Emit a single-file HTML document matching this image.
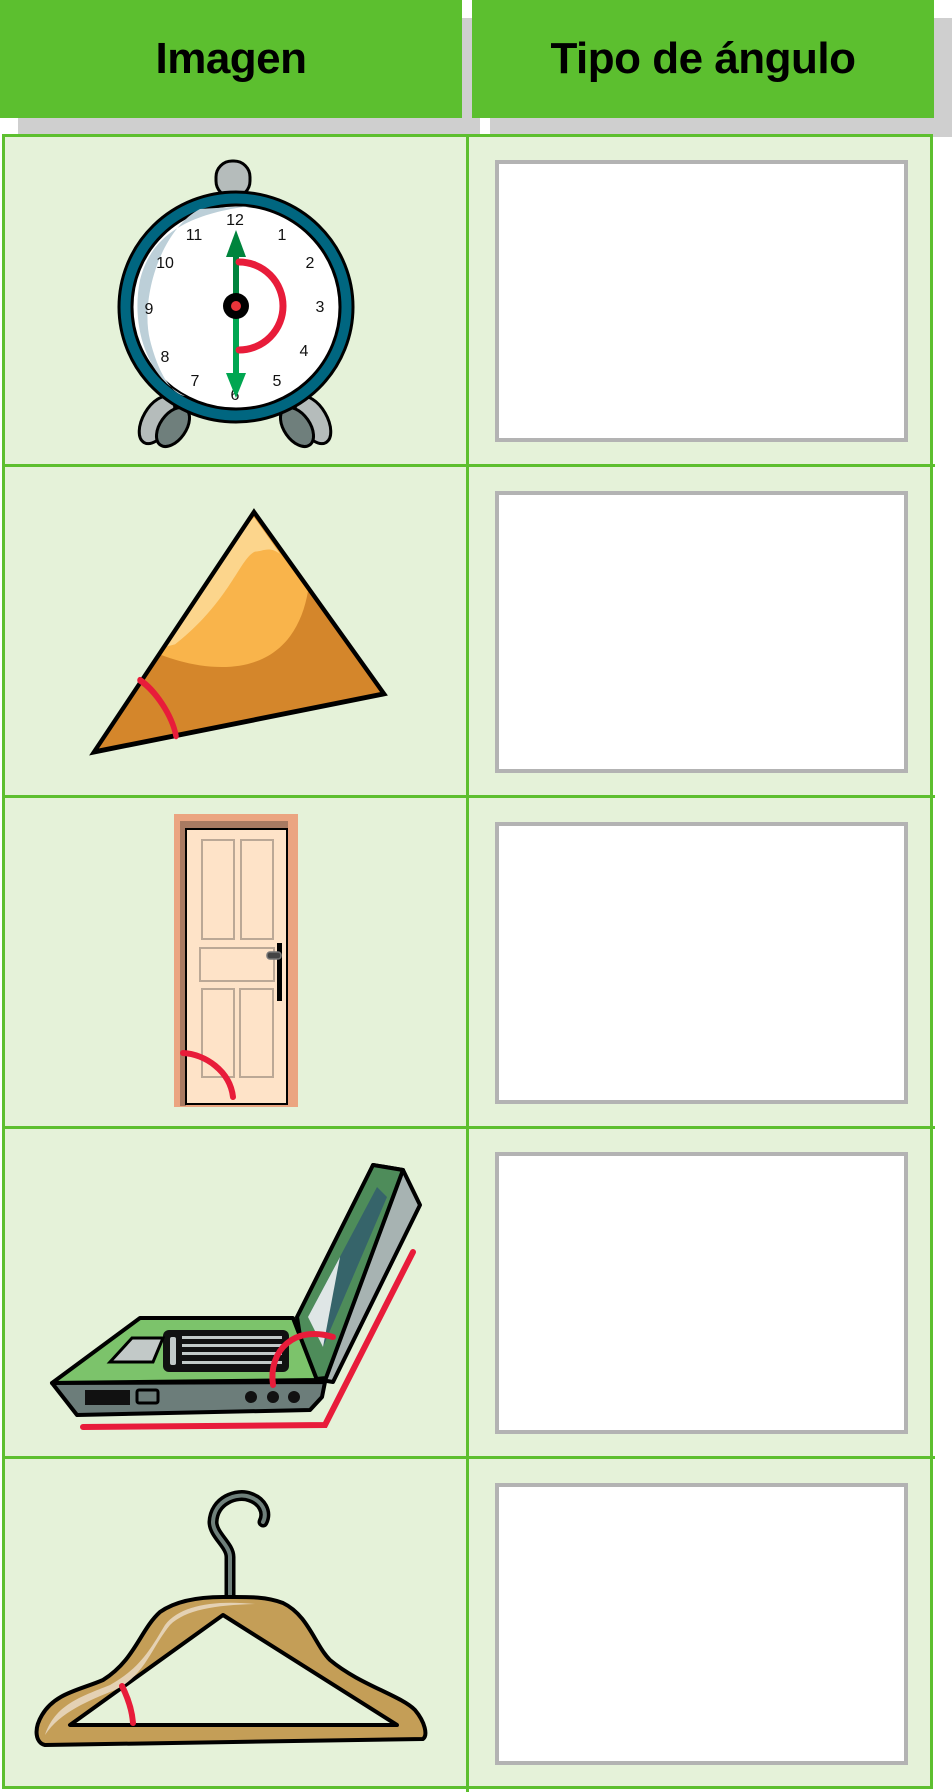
<!DOCTYPE html>
<html><head><meta charset="utf-8"><style>
html,body{margin:0;padding:0;background:#fff;}
body{width:952px;height:1792px;position:relative;overflow:hidden;font-family:"Liberation Sans",sans-serif;}
.sh{position:absolute;background:#cfcfcf;}
.hd{position:absolute;background:#5cbf2f;top:0;height:118px;display:flex;align-items:center;justify-content:center;font-weight:bold;font-size:44px;color:#000;letter-spacing:-0.5px;}
.tbl{position:absolute;left:2px;top:134px;width:931px;height:1655px;background:#e5f2d9;border:3px solid #5dbf2f;box-sizing:border-box;}
.hl{position:absolute;left:2px;width:933px;height:3px;background:#5dbf2f;}
.vl{position:absolute;left:466px;top:134px;width:3px;height:1658px;background:#5dbf2f;}
.box{position:absolute;left:495px;width:413px;height:282px;background:#fff;border:4px solid #b3b3b3;box-sizing:border-box;}
svg{position:absolute;left:0;top:0;}
</style></head><body>
<div class="sh" style="left:18px;top:18px;width:462px;height:119px"></div>
<div class="sh" style="left:490px;top:18px;width:462px;height:119px"></div>
<div class="hd" style="left:0;width:462px">Imagen</div>
<div class="hd" style="left:472px;width:462px">Tipo de ángulo</div>
<div class="tbl"></div>
<div class="hl" style="top:464px"></div>
<div class="hl" style="top:795px"></div>
<div class="hl" style="top:1126px"></div>
<div class="hl" style="top:1456px"></div>
<div class="vl"></div>
<div class="box" style="top:160px"></div>
<div class="box" style="top:491px"></div>
<div class="box" style="top:822px"></div>
<div class="box" style="top:1152px"></div>
<div class="box" style="top:1483px"></div>
<svg width="952" height="1792" viewBox="0 0 952 1792">
<defs><clipPath id="tri"><path d="M254 508 L384 655 L94 702 Z"/></clipPath></defs>
<!-- clock -->
<g stroke="#000" stroke-width="3">
<ellipse cx="157" cy="420" rx="14" ry="26" transform="rotate(30 157 420)" fill="#b5bcbb"/>
<ellipse cx="173" cy="427" rx="13" ry="22" transform="rotate(35 173 427)" fill="#6f7f7c"/>
<ellipse cx="313" cy="420" rx="14" ry="26" transform="rotate(-30 313 420)" fill="#b5bcbb"/>
<ellipse cx="297" cy="427" rx="13" ry="22" transform="rotate(-35 297 427)" fill="#6f7f7c"/>
<rect x="216" y="161" width="34" height="36" rx="16" fill="#b5bcbb"/>
<ellipse cx="236" cy="307" rx="117" ry="115" fill="#006680"/>
<ellipse cx="236" cy="307" rx="104" ry="102" fill="#fff"/>
</g>
<path d="M200 209 C160 230 140 300 150 340 C160 380 175 395 185 396 C150 380 130 330 140 280 C150 240 180 215 250 206 Z" fill="#bccfd8"/>
<g font-size="16" fill="#111" text-anchor="middle" font-family="Liberation Sans,sans-serif">
<text x="235" y="225">12</text><text x="282" y="240">1</text><text x="310" y="268">2</text><text x="320" y="312">3</text><text x="304" y="356">4</text><text x="277" y="386">5</text><text x="235" y="400">6</text><text x="195" y="386">7</text><text x="165" y="362">8</text><text x="149" y="314">9</text><text x="165" y="268">10</text><text x="194" y="240">11</text>
</g>
<line x1="236" y1="240" x2="236" y2="300" stroke="#00843d" stroke-width="6"/>
<line x1="236" y1="310" x2="236" y2="380" stroke="#00a651" stroke-width="6"/>
<path d="M236 230 L226 257 L246 257 Z" fill="#00843d"/>
<path d="M236 398 L226 373 L246 373 Z" fill="#00a651"/>
<path d="M239 262 A44 44 0 0 1 239 350" fill="none" stroke="#e81c3a" stroke-width="7" stroke-linecap="round"/>
<circle cx="236" cy="306" r="13" fill="#000"/><circle cx="236" cy="306" r="5" fill="#e8343a"/>
<!-- triangle -->
<g transform="matrix(1,0,0,1.237,0,-116.4)">
<g clip-path="url(#tri)">
<path d="M254 508 L384 655 L94 702 Z" fill="#d4862b"/>
<path d="M254 512 L308 572 C300 610 270 640 200 632 C170 628 150 620 133 614 Z" fill="#f9b44b"/>
<path d="M254 512 L280 542 C270 535 262 540 255 540 C240 545 230 580 175 615 L150 620 Z" fill="#fcd894" opacity=".9"/>
</g>
<path d="M254 508 L384 655 L94 702 Z" fill="none" stroke="#000" stroke-width="4"/>
<path d="M140 644 C155 652 172 672 176 689" fill="none" stroke="#e81c3a" stroke-width="5.5" stroke-linecap="round"/>
</g>
<!-- door -->
<g transform="translate(0,61)">
<rect x="174" y="753" width="124" height="293" fill="#eba581"/>
<rect x="180" y="760" width="108" height="8" fill="#a87a62"/>
<rect x="180" y="760" width="6" height="285" fill="#a87a62"/>
<rect x="186" y="768" width="101" height="275" fill="#fee3c8" stroke="#000" stroke-width="2"/>
<g fill="none" stroke="#bba896" stroke-width="2">
<rect x="202" y="779" width="32" height="99"/><rect x="241" y="779" width="32" height="99"/>
<rect x="200" y="887" width="74" height="33"/>
<rect x="202" y="928" width="32" height="88"/><rect x="240" y="928" width="33" height="88"/>
</g>
<rect x="277" y="882" width="5" height="58" fill="#000"/>
<rect x="267" y="891" width="14" height="7" rx="3" fill="#444" stroke="#777" stroke-width="1.5"/>
<path d="M183 992 C205 993 230 1010 233 1036" fill="none" stroke="#e81c3a" stroke-width="6" stroke-linecap="round"/>
</g>
<!-- laptop -->
<g stroke="#000" stroke-width="4" stroke-linejoin="round">
<path d="M303 1377 L373 1165 L403 1170 L420 1205 L333 1382 Z" fill="#a7b3b2"/>
<path d="M297 1317 L373 1165 L403 1170 L326 1378 L307 1380 Z" fill="#4e8c5a"/>
<path d="M52 1383 L140 1318 L293 1318 L317 1380 Z" fill="#7cc36b"/>
<path d="M52 1383 L325 1382 L322 1397 L310 1410 L77 1415 Z" fill="#6c7d7a"/>
</g>
<path d="M308 1317 L377 1187 L387 1197 L323 1347 Z" fill="#36646a"/>
<path d="M308 1317 L340 1257 L323 1347 Z" fill="#dfe6e6"/>
<rect x="163" y="1330" width="126" height="42" rx="6" fill="#111"/>
<g fill="#c2c9c8"><rect x="170" y="1337" width="6" height="28" rx="2"/>
<g><rect x="182" y="1336" width="100" height="3"/><rect x="182" y="1344" width="100" height="3"/><rect x="182" y="1352" width="100" height="3"/><rect x="182" y="1361" width="100" height="3"/></g></g>
<path d="M110 1362 L132 1338 L163 1338 L153 1362 Z" fill="#c2c9c8" stroke="#000" stroke-width="3"/>
<rect x="85" y="1390" width="45" height="15" fill="#111"/>
<rect x="137" y="1390" width="21" height="13" rx="2" fill="#6c7d7a" stroke="#000" stroke-width="3"/>
<circle cx="251" cy="1397" r="6" fill="#111"/><circle cx="273" cy="1397" r="6" fill="#111"/><circle cx="294" cy="1397" r="6" fill="#111"/>
<path d="M273 1385 C268 1350 295 1325 333 1337" fill="none" stroke="#e81c3a" stroke-width="6" stroke-linecap="round"/>
<path d="M83 1427 L325 1425 L413 1252" fill="none" stroke="#e81c3a" stroke-width="6" stroke-linecap="round" stroke-linejoin="miter"/>
<!-- hanger -->
<path d="M230 1597 L230 1557 C230 1545 213 1535 213 1522 C214 1500 237 1492 250 1497 C262 1501 268 1512 263 1522" fill="none" stroke="#000" stroke-width="11" stroke-linecap="round"/>
<path d="M230 1595 L230 1557 C230 1545 213 1535 213 1522 C214 1500 237 1492 250 1497 C262 1501 268 1512 263 1522" fill="none" stroke="#6f807b" stroke-width="4" stroke-linecap="round"/>
<path d="M223 1597 C200 1597 177 1600 160 1612 C140 1630 135 1660 103 1680 C80 1690 55 1693 42 1715 C33 1730 36 1743 45 1745 L233 1742 L423 1739 C428 1735 425 1722 415 1710 C400 1695 360 1685 330 1660 C315 1645 308 1615 283 1603 C265 1596 245 1597 223 1597 Z M223 1615 L70 1725 L397 1725 Z" fill="#c49e57" fill-rule="evenodd" stroke="#000" stroke-width="4" stroke-linejoin="round"/>
<path d="M255 1604 C215 1600 180 1605 165 1625 C150 1650 140 1668 110 1685 C80 1697 55 1705 45 1735 C60 1712 90 1700 115 1690 C145 1675 150 1650 170 1625 C185 1610 215 1605 255 1604 Z" fill="#e4d1b4"/>
<path d="M122 1686 C128 1698 132 1710 133 1723" fill="none" stroke="#e81c3a" stroke-width="6" stroke-linecap="round"/>
</svg>
</body></html>
